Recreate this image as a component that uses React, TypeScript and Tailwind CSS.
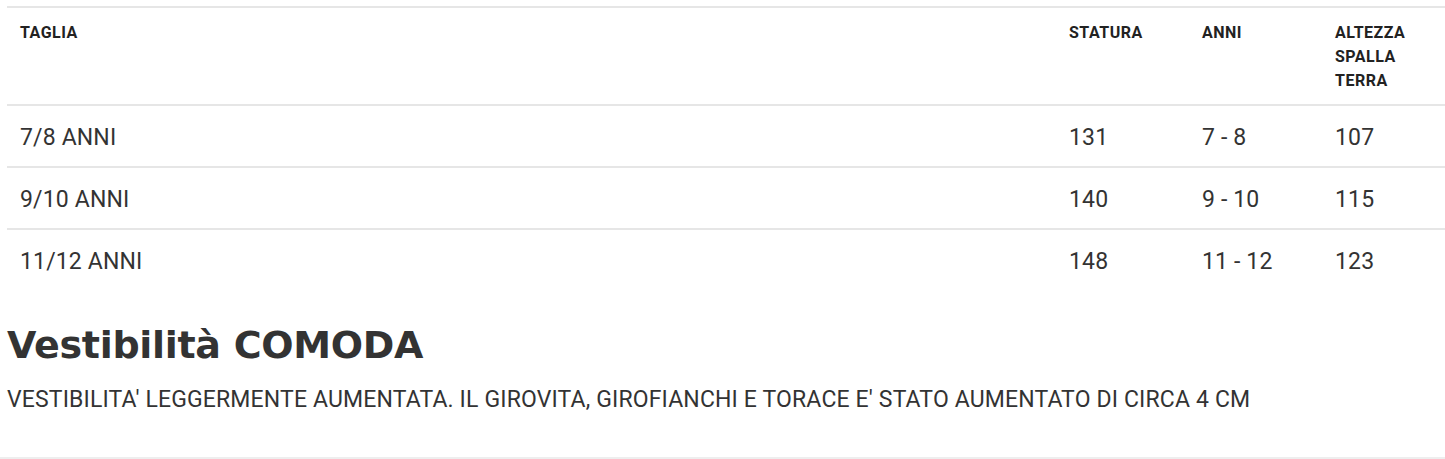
const rows = [
  { taglia: '7/8 ANNI', statura: '131', anni: '7 - 8', altezza: '107' },
  { taglia: '9/10 ANNI', statura: '140', anni: '9 - 10', altezza: '115' },
  { taglia: '11/12 ANNI', statura: '148', anni: '11 - 12', altezza: '123' },
];

const App = () => {
  return (
    <div className="bg-white w-[1445px] h-[459px] overflow-hidden font-['Roboto',sans-serif] text-[#333]">
      <div className="pt-[6px] pl-[7px]">
        <table className="w-full border-collapse border-t-2 border-[#e6e6e6]">
          <thead>
            <tr className="border-b-2 border-[#e6e6e6] text-left align-top">
              <th className="w-[1049px] px-[13px] pt-[13px] pb-[11px] text-[16px] leading-6 font-bold tracking-[0.5px] text-[#222]">TAGLIA</th>
              <th className="w-[133px] px-[13px] pt-[13px] pb-[11px] text-[16px] leading-6 font-bold tracking-[0.5px] text-[#222]">STATURA</th>
              <th className="w-[133px] px-[13px] pt-[13px] pb-[11px] text-[16px] leading-6 font-bold tracking-[0.5px] text-[#222]">ANNI</th>
              <th className="px-[13px] pt-[13px] pb-[11px] text-[16px] leading-6 font-bold tracking-[0.5px] text-[#222]">
                ALTEZZA
                <br />
                SPALLA
                <br />
                TERRA
              </th>
            </tr>
          </thead>
          <tbody>
            {rows.map((r, i) => (
              <tr key={r.taglia} className={i < rows.length - 1 ? 'border-b-2 border-[#e6e6e6]' : ''}>
                <td className="px-[13px] pt-[14px] pb-[10px] text-[23px] leading-9 tracking-[0.15px]">{r.taglia}</td>
                <td className="px-[13px] pt-[14px] pb-[10px] text-[23px] leading-9 tracking-[0.15px]">{r.statura}</td>
                <td className="px-[13px] pt-[14px] pb-[10px] text-[23px] leading-9 tracking-[0.15px]">{r.anni}</td>
                <td className="px-[13px] pt-[14px] pb-[10px] text-[23px] leading-9 tracking-[0.15px]">{r.altezza}</td>
              </tr>
            ))}
          </tbody>
        </table>

        <h2 className="mt-[27px] font-['DejaVu_Sans',sans-serif] text-[38px] leading-[56px] font-bold text-[#333] tracking-[-0.3px]">
          Vestibilità COMODA
        </h2>
        <p className="mt-[11px] text-[23px] leading-8 tracking-[0.15px]">
          VESTIBILITA' LEGGERMENTE AUMENTATA. IL GIROVITA, GIROFIANCHI E TORACE E' STATO AUMENTATO DI CIRCA 4 CM
        </p>
      </div>
      <div className="mt-[41px] border-t-2 border-[#eeeeee]" />
    </div>
  );
};

export default App;
